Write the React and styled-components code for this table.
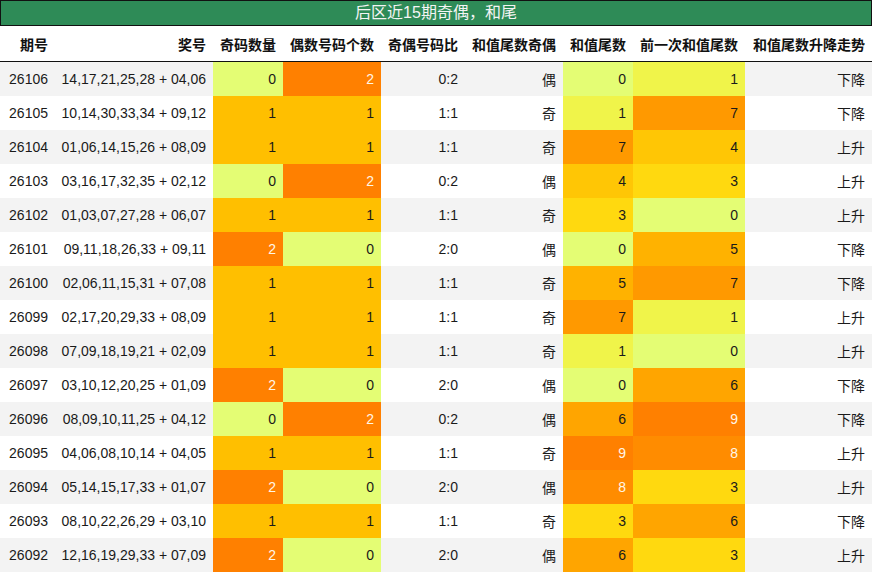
import React from 'react';
import styled, { createGlobalStyle } from 'styled-components';

const rows = [
  ['26106', '14,17,21,25,28 + 04,06', 0, 2, '0:2', '偶', 0, 1, '下降'],
  ['26105', '10,14,30,33,34 + 09,12', 1, 1, '1:1', '奇', 1, 7, '下降'],
  ['26104', '01,06,14,15,26 + 08,09', 1, 1, '1:1', '奇', 7, 4, '上升'],
  ['26103', '03,16,17,32,35 + 02,12', 0, 2, '0:2', '偶', 4, 3, '上升'],
  ['26102', '01,03,07,27,28 + 06,07', 1, 1, '1:1', '奇', 3, 0, '上升'],
  ['26101', '09,11,18,26,33 + 09,11', 2, 0, '2:0', '偶', 0, 5, '下降'],
  ['26100', '02,06,11,15,31 + 07,08', 1, 1, '1:1', '奇', 5, 7, '下降'],
  ['26099', '02,17,20,29,33 + 08,09', 1, 1, '1:1', '奇', 7, 1, '上升'],
  ['26098', '07,09,18,19,21 + 02,09', 1, 1, '1:1', '奇', 1, 0, '上升'],
  ['26097', '03,10,12,20,25 + 01,09', 2, 0, '2:0', '偶', 0, 6, '下降'],
  ['26096', '08,09,10,11,25 + 04,12', 0, 2, '0:2', '偶', 6, 9, '下降'],
  ['26095', '04,06,08,10,14 + 04,05', 1, 1, '1:1', '奇', 9, 8, '上升'],
  ['26094', '05,14,15,17,33 + 01,07', 2, 0, '2:0', '偶', 8, 3, '上升'],
  ['26093', '08,10,22,26,29 + 03,10', 1, 1, '1:1', '奇', 3, 6, '下降'],
  ['26092', '12,16,19,29,33 + 07,09', 2, 0, '2:0', '偶', 6, 3, '上升'],
];

const headers = ['期号', '奖号', '奇码数量', '偶数号码个数', '奇偶号码比', '和值尾数奇偶', '和值尾数', '前一次和值尾数', '和值尾数升降走势'];

// heat colours
const countColor = ['#e4fd74', '#ffbf00', '#ff8000'];
const tailColor = ['#e4fd74', '#f0f44a', '#f8e82c', '#ffd90f', '#ffc605', '#ffb200', '#ffa500', '#ff9900', '#ff8c00', '#ff8000'];

const GlobalStyle = createGlobalStyle`
  body {
    margin: 0;
    background: #fff;
    font-family: "Liberation Sans", "Noto Sans CJK SC", sans-serif;
  }
`;

const Wrap = styled.div`
  width: 872px;
`;

const Title = styled.div`
  height: 24px;
  border: 1px solid #111;
  background: #2e8b57;
  color: #f4f4f4;
  font-family: "Liberation Sans", "Noto Sans CJK SC", sans-serif;
  font-size: 16px;
  line-height: 24px;
  text-align: center;
`;

const Grid = styled.div`
  display: grid;
  grid-template-columns: 55px 158px 70px 98px 84px 98px 70px 112px 127px;
`;

const HeadRow = styled(Grid)`
  height: 35px;
  border-bottom: 1px solid #111;
  background: #fff;
`;

const HeadCell = styled.div`
  display: flex;
  align-items: center;
  justify-content: flex-end;
  padding-right: 7px;
  font-family: "Noto Sans CJK SC", sans-serif;
  font-weight: 700;
  font-size: 14px;
  color: #111;
  white-space: nowrap;
`;

const Row = styled(Grid)`
  height: 34px;
  background: ${(p) => (p.$striped ? '#f3f3f3' : '#fff')};
`;

const Cell = styled.div`
  display: flex;
  align-items: center;
  justify-content: flex-end;
  padding-right: 7px;
  font-size: 14px;
  color: ${(p) => (p.$light ? '#fff6e8' : '#1a1a1a')};
  background: ${(p) => p.$bg || 'transparent'};
  white-space: nowrap;
`;

function App() {
  return (
    <Wrap>
      <GlobalStyle />
      <Title>后区近15期奇偶，和尾</Title>
      <HeadRow>
        {headers.map((h) => (
          <HeadCell key={h}>{h}</HeadCell>
        ))}
      </HeadRow>
      {rows.map((r, i) => (
        <Row key={r[0]} $striped={i % 2 === 0}>
          <Cell>{r[0]}</Cell>
          <Cell>{r[1]}</Cell>
          <Cell $bg={countColor[r[2]]} $light={r[2] === 2}>{r[2]}</Cell>
          <Cell $bg={countColor[r[3]]} $light={r[3] === 2}>{r[3]}</Cell>
          <Cell>{r[4]}</Cell>
          <Cell>{r[5]}</Cell>
          <Cell $bg={tailColor[r[6]]} $light={r[6] >= 8}>{r[6]}</Cell>
          <Cell $bg={tailColor[r[7]]} $light={r[7] >= 8}>{r[7]}</Cell>
          <Cell>{r[8]}</Cell>
        </Row>
      ))}
    </Wrap>
  );
}

export default App;
